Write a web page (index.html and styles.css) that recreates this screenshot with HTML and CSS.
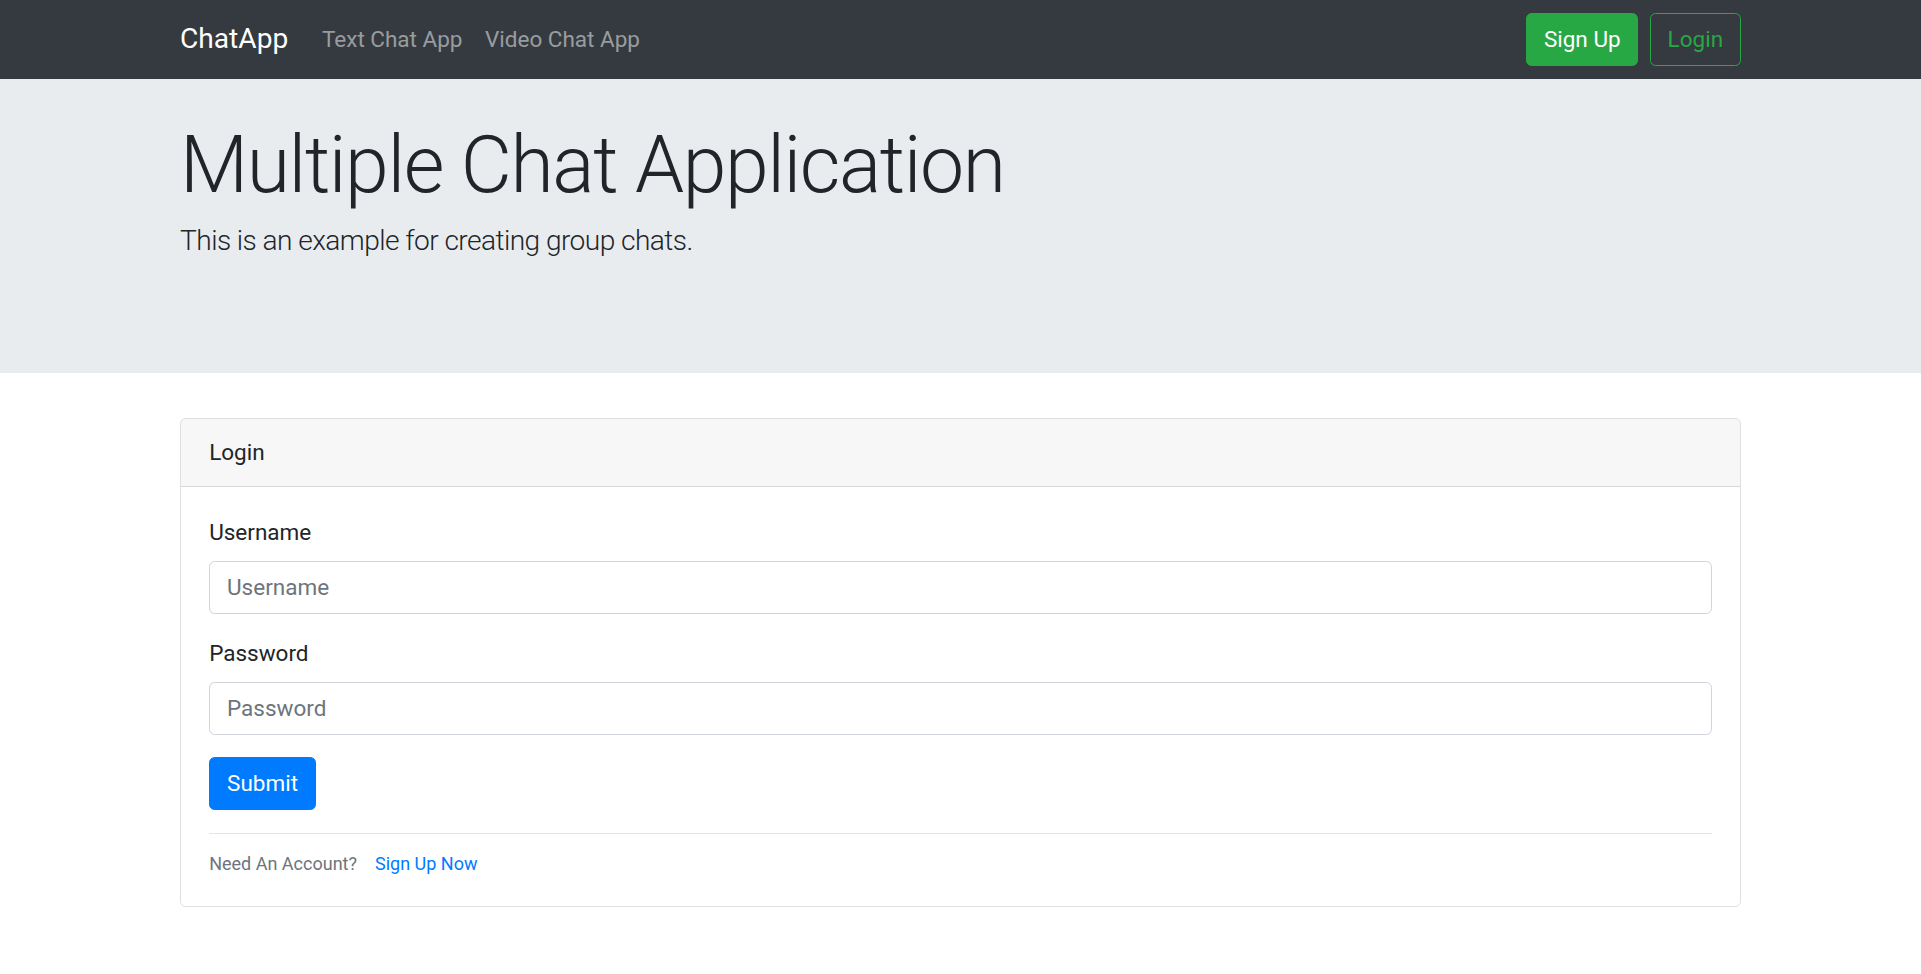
FILE: index.html
```html
<!DOCTYPE html>
<html lang="en">
<head>
<meta charset="utf-8">
<title>ChatApp</title>
<link rel="stylesheet" href="styles.css">
</head>
<body>
<nav class="navbar">
  <div class="container nav-inner">
    <a class="brand" href="#">ChatApp</a>
    <ul class="nav-links">
      <li><a class="nav-link" href="#">Text Chat App</a></li>
      <li><a class="nav-link" href="#">Video Chat App</a></li>
    </ul>
    <div class="nav-actions">
      <a class="btn btn-success" href="#">Sign Up</a>
      <a class="btn btn-outline-success" href="#">Login</a>
    </div>
  </div>
</nav>

<header class="jumbotron">
  <div class="container">
    <h1 class="display-4">Multiple Chat Application</h1>
    <p class="lead">This is an example for creating group chats.</p>
  </div>
</header>

<main class="container">
  <section class="card">
    <div class="card-header">Login</div>
    <div class="card-body">
      <form class="login-form">
        <div class="form-group">
          <label for="username">Username</label>
          <input id="username" class="form-control" type="text" placeholder="Username">
        </div>
        <div class="form-group">
          <label for="password">Password</label>
          <input id="password" class="form-control" type="password" placeholder="Password">
        </div>
        <button class="btn btn-primary" type="button">Submit</button>
      </form>
      <hr class="divider">
      <p class="card-foot"><span class="muted">Need An Account?</span><a class="link" href="#">Sign Up Now</a></p>
    </div>
  </section>
</main>
</body>
</html>
```

FILE: styles.css
```css
html {
  zoom: 1.40625;
}
* {
  box-sizing: border-box;
}
body {
  margin: 0;
  font-family: Roboto, "Segoe UI", "Noto Sans", "Liberation Sans", Arial, sans-serif;
  font-size: 16px;
  line-height: 1.5;
  color: #212529;
  background: #fff;
}
a {
  text-decoration: none;
}
.container {
  max-width: 1140px;
  margin: 0 auto;
  padding: 0 15px;
}

/* navbar */
.navbar {
  background: #343a40;
  padding: 8px 0;
}
.nav-inner {
  display: flex;
  align-items: center;
}
.brand {
  color: #fff;
  font-size: 20px;
  line-height: 30px;
  padding: 5px 0;
  margin-right: 16px;
}
.nav-links {
  display: flex;
  list-style: none;
  margin: 0;
  padding: 0;
}
.nav-link {
  display: block;
  padding: 8px;
  color: rgba(255, 255, 255, 0.5);
}
.nav-actions {
  margin-left: auto;
  display: flex;
  gap: 8px;
}

/* buttons */
.btn {
  display: inline-block;
  font-family: inherit;
  font-size: 16px;
  line-height: 24px;
  padding: 6px 12px;
  border: 1px solid transparent;
  border-radius: 4px;
  cursor: pointer;
}
.btn-success {
  background: #28a745;
  border-color: #28a745;
  color: #fff;
}
.btn-outline-success {
  background: transparent;
  border-color: #28a745;
  color: #28a745;
}
.btn-primary {
  background: #007bff;
  border-color: #007bff;
  color: #fff;
}

/* jumbotron */
.jumbotron {
  background: #e9ecef;
  padding: 28px 0 63px;
  margin-bottom: 32px;
}
.display-4 {
  margin: 0 0 5px;
  font-size: 56px;
  font-weight: 300;
  line-height: 1.2;
  letter-spacing: -1px;
}
.lead {
  margin: 0 0 16px;
  font-size: 20px;
  font-weight: 300;
  line-height: 30px;
  letter-spacing: -0.4px;
}

/* card */
.card {
  border: 1px solid rgba(0, 0, 0, 0.125);
  border-radius: 4px;
  overflow: hidden;
}
.card-header {
  padding: 12px 20px;
  background: rgba(0, 0, 0, 0.03);
  border-bottom: 1px solid rgba(0, 0, 0, 0.125);
}
.card-body {
  padding: 20px;
}
.form-group {
  margin-bottom: 16px;
}
.form-group label {
  display: inline-block;
  margin-bottom: 8px;
}
.form-control {
  display: block;
  width: 100%;
  height: 38px;
  padding: 6px 12px;
  font-family: inherit;
  font-size: 16px;
  line-height: 24px;
  color: #495057;
  background: #fff;
  border: 1px solid #ced4da;
  border-radius: 4px;
}
.form-control::placeholder {
  color: #6c757d;
}
.divider {
  margin: 16px 0 12px;
  border: 0;
  border-top: 1px solid rgba(0, 0, 0, 0.1);
}
.card-foot {
  margin: 0;
  font-size: 12.8px;
  line-height: 19.2px;
  display: flex;
  gap: 12.8px;
}
.muted {
  color: #6c757d;
}
.link {
  color: #007bff;
}
```
